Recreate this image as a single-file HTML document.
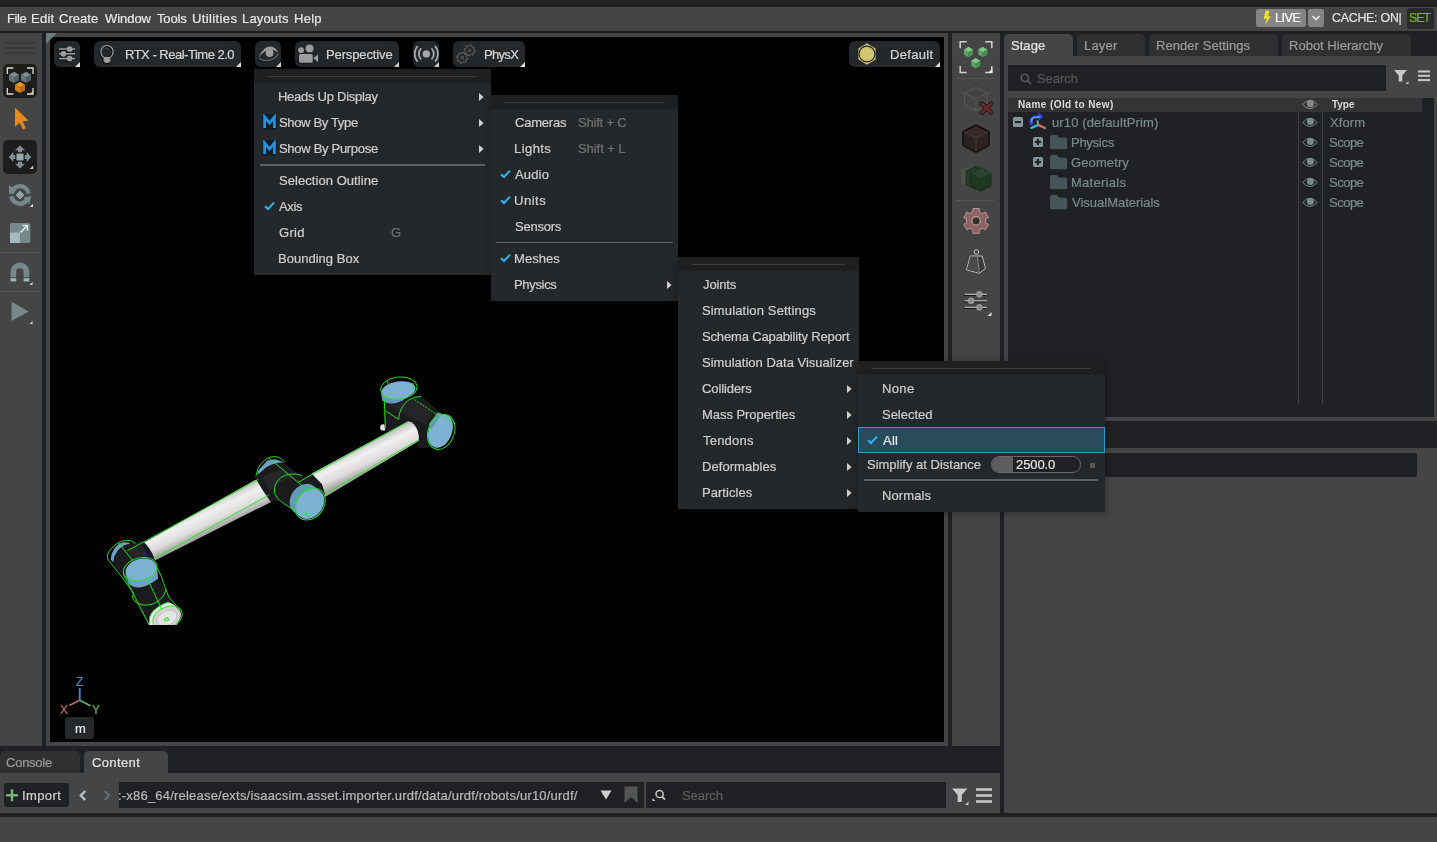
<!DOCTYPE html>
<html lang="en"><head><meta charset="utf-8"><title>Isaac Sim</title>
<style>
html,body{margin:0;padding:0;}
body{width:1437px;height:842px;overflow:hidden;background:#454545;position:relative;font-family:"Liberation Sans", "DejaVu Sans", sans-serif;}
div,span,svg{position:absolute;box-sizing:border-box;}
span{white-space:nowrap;line-height:1;-webkit-text-stroke:0.22px currentColor;will-change:transform;}
</style></head>
<body>
<div style="left:0px;top:0px;width:1437px;height:7px;background:#212121;"></div>
<div style="left:0px;top:31px;width:1437px;height:2px;background:#211d1b;"></div>
<div style="left:42px;top:33px;width:4px;height:713px;background:#1f2124;"></div>
<div style="left:50px;top:37px;width:894px;height:705px;background:#000000;"></div>
<svg style="left:46px;top:33px" width="12" height="12"><polygon points="0,0 11,0 0,11" fill="#6c7b7e"/></svg>
<div style="left:948px;top:33px;width:4px;height:713px;background:#1f2124;"></div>
<div style="left:1000px;top:33px;width:4px;height:780px;background:#1f2124;"></div>
<div style="left:0px;top:746px;width:1000px;height:27px;background:#1f2124;"></div>
<div style="left:0px;top:813px;width:1437px;height:4px;background:#231f1d;"></div>
<div style="left:1004px;top:33px;width:433px;height:23px;background:#1f2124;"></div>
<div style="left:1004px;top:34px;width:69px;height:22px;background:#454545;border-radius:5px 5px 0 0;"></div>
<div style="left:1077px;top:34px;width:68px;height:22px;background:#303030;border-radius:5px 5px 0 0;"></div>
<div style="left:1149px;top:34px;width:129px;height:22px;background:#303030;border-radius:5px 5px 0 0;"></div>
<div style="left:1282px;top:34px;width:129px;height:22px;background:#303030;border-radius:5px 5px 0 0;"></div>
<div style="left:1008px;top:65px;width:378px;height:26px;background:#1f2124;"></div>
<div style="left:1008px;top:98px;width:426px;height:319px;background:#1f2124;"></div>
<div style="left:1008px;top:98px;width:414px;height:14px;background:#343434;"></div>
<div style="left:1298px;top:112px;width:1px;height:293px;background:#3c3e40;"></div>
<div style="left:1322px;top:112px;width:1px;height:293px;background:#3c3e40;"></div>
<div style="left:1004px;top:421px;width:433px;height:27px;background:#1f2124;"></div>
<div style="left:1008px;top:453px;width:409px;height:24px;background:#1f2124;border-radius:2px;"></div>
<span style="left:7px;top:12px;font-size:13px;color:#e6e6e6;letter-spacing:-0.436px;">File</span><span style="left:31px;top:12px;font-size:13px;color:#e6e6e6;letter-spacing:0.252px;">Edit</span><span style="left:59px;top:12px;font-size:13px;color:#e6e6e6;letter-spacing:0.041px;">Create</span><span style="left:105px;top:12px;font-size:13px;color:#e6e6e6;letter-spacing:-0.045px;">Window</span><span style="left:157px;top:12px;font-size:13px;color:#e6e6e6;letter-spacing:-0.149px;">Tools</span><span style="left:192px;top:12px;font-size:13px;color:#e6e6e6;letter-spacing:0.383px;">Utilities</span><span style="left:242px;top:12px;font-size:13px;color:#e6e6e6;letter-spacing:0.165px;">Layouts</span><span style="left:294px;top:12px;font-size:13px;color:#e6e6e6;letter-spacing:0.287px;">Help</span><div style="left:1256px;top:9px;width:50px;height:18px;background:#848484;border-radius:2px;"></div>
<svg style="left:1262px;top:10px" width="10" height="16" viewBox="0 0 10 16"><polygon points="3.6,0.8 7.6,0.8 6,6.2 8.8,6.2 3.2,15 4.6,8.8 1.6,8.8" fill="#ecdc2c"/></svg>
<span style="left:1275px;top:12px;font-size:12.5px;color:#ffffff;letter-spacing:-0.416px;">LIVE</span><div style="left:1308px;top:9px;width:16px;height:18px;background:#848484;border-radius:2px;"></div>
<svg style="left:1311px;top:14px" width="10" height="8" viewBox="0 0 10 8"><polyline points="1.5,2 5,5.5 8.5,2" fill="none" stroke="#e8e8e8" stroke-width="1.6"/></svg>
<span style="left:1332px;top:12px;font-size:12.3px;color:#e0e0e0;letter-spacing:-0.190px;">CACHE: ON|</span><div style="left:1407px;top:7.5px;width:26.6px;height:21.5px;background:#2a2a2a;border-radius:3px;"></div>
<span style="left:1409px;top:12px;font-size:12.5px;color:#76b900;letter-spacing:-1.200px;">SET</span><div style="left:54px;top:41px;width:26px;height:26px;background:#25282b;border-radius:6px;"></div>
<svg style="left:75px;top:62px" width="5" height="5"><polygon points="5,0 5,5 0,5" fill="#dcdcdc"/></svg>
<svg style="left:57px;top:44px" width="21" height="20" viewBox="57 44 21 20">
<g stroke="#14161a" stroke-width="1.6" fill="#14161a" transform="translate(-0.8,0.9)"><line x1="59" y1="49" x2="75" y2="49"/><line x1="59" y1="53.8" x2="75" y2="53.8"/><line x1="59" y1="58.6" x2="75" y2="58.6"/><circle cx="69.6" cy="49" r="2.4"/><circle cx="63.4" cy="53.8" r="2.4"/><circle cx="69.6" cy="58.6" r="2.4"/></g>
<g stroke="#9c9c9c" stroke-width="1.5" fill="#9c9c9c"><line x1="59" y1="49" x2="75" y2="49"/><line x1="59" y1="53.8" x2="75" y2="53.8"/><line x1="59" y1="58.6" x2="75" y2="58.6"/><circle cx="69.6" cy="49" r="2.1"/><circle cx="63.4" cy="53.8" r="2.1"/><circle cx="69.6" cy="58.6" r="2.1"/></g></svg>
<div style="left:94px;top:41px;width:147px;height:26px;background:#25282b;border-radius:6px;"></div>
<svg style="left:236px;top:62px" width="5" height="5"><polygon points="5,0 5,5 0,5" fill="#dcdcdc"/></svg>
<svg style="left:98px;top:43px" width="18" height="23" viewBox="98 43 18 23">
<path d="M103.6,57.5 C102,56.2 100.9,54.2 100.9,51.6 A6.1,6.1 0 0 1 113.1,51.6 C113.1,54.2 112,56.2 110.4,57.5 L110.4,61.2 Q107,65 103.6,61.2 Z" fill="none" stroke="#14161a" stroke-width="1.8" transform="translate(-0.7,0.8)"/>
<path d="M103.6,57.5 C102,56.2 100.9,54.2 100.9,51.6 A6.1,6.1 0 0 1 113.1,51.6 C113.1,54.2 112,56.2 110.4,57.5" fill="none" stroke="#9c9c9c" stroke-width="1.2"/>
<path d="M103.6,57 L110.4,57 L110.4,61.2 Q107,65 103.6,61.2 Z" fill="#9c9c9c"/>
<path d="M105.5,48.6 Q107.5,47.8 109,49.6" fill="none" stroke="#555" stroke-width="0.8"/></svg>
<span style="left:125px;top:48px;font-size:13px;color:#d4d4d4;letter-spacing:-0.495px;">RTX - Real-Time 2.0</span><div style="left:255px;top:41px;width:26px;height:26px;background:#25282b;border-radius:6px;"></div>
<svg style="left:276px;top:62px" width="5" height="5"><polygon points="5,0 5,5 0,5" fill="#dcdcdc"/></svg>
<svg style="left:257px;top:44px" width="23" height="19" viewBox="257 44 23 19">
<path d="M258.6,57.6 Q263.4,46.2 270.2,46.4 Q275.8,46.5 278.3,52.8 Q274.6,49.4 270,49.4 Q264.4,49.6 258.6,57.6 Z" fill="#9c9c9c"/>
<path d="M258.8,58.4 Q266.5,62.8 273.8,58.8 Q276.6,57 278,53.8" fill="none" stroke="#111418" stroke-width="1.6" transform="translate(-0.5,0.8)"/>
<path d="M258.8,58.4 Q266.5,62.8 273.8,58.8 Q276.6,57 278,53.8" fill="none" stroke="#707070" stroke-width="1.1"/>
<circle cx="269.6" cy="53" r="3.9" fill="#9c9c9c"/></svg>
<div style="left:295px;top:41px;width:104px;height:26px;background:#25282b;border-radius:6px;"></div>
<svg style="left:394px;top:62px" width="5" height="5"><polygon points="5,0 5,5 0,5" fill="#dcdcdc"/></svg>
<svg style="left:296px;top:43px" width="24" height="21" viewBox="296 43 24 21">
<g fill="#14161a" transform="translate(-0.8,0.8)"><circle cx="301" cy="50.2" r="3"/><circle cx="309.5" cy="48.4" r="4.1"/><rect x="299" y="54" width="13.7" height="8.8" rx="1.5"/><polygon points="313.4,58.3 318,54.3 318,62.3"/></g>
<g fill="#9c9c9c"><circle cx="301" cy="50.2" r="2.9"/><circle cx="309.5" cy="48.4" r="4"/><rect x="299" y="54" width="13.7" height="8.8" rx="1.5"/><polygon points="313.4,58.3 318,54.3 318,62.3"/></g></svg>
<span style="left:326px;top:48px;font-size:13px;color:#d4d4d4;letter-spacing:-0.128px;">Perspective</span><div style="left:413px;top:41px;width:26px;height:26px;background:#25282b;border-radius:6px;"></div>
<svg style="left:434px;top:62px" width="5" height="5"><polygon points="5,0 5,5 0,5" fill="#dcdcdc"/></svg>
<svg style="left:414px;top:43px" width="25" height="22" viewBox="414 43 25 22">
<g fill="none" stroke="#171a3a" stroke-width="1.9" transform="translate(-0.7,0.6)"><path d="M421.2,48.4 A7.5,7.5 0 0 0 421.2,59.4"/><path d="M431.4,48.4 A7.5,7.5 0 0 1 431.4,59.4"/><path d="M417.6,46.2 A11.5,11.5 0 0 0 417.6,61.6"/><path d="M435,46.2 A11.5,11.5 0 0 1 435,61.6"/></g>
<g fill="none" stroke="#a8a8a8" stroke-width="1.8"><path d="M421.2,48.4 A7.5,7.5 0 0 0 421.2,59.4"/><path d="M431.4,48.4 A7.5,7.5 0 0 1 431.4,59.4"/><path d="M417.6,46.2 A11.5,11.5 0 0 0 417.6,61.6"/><path d="M435,46.2 A11.5,11.5 0 0 1 435,61.6"/></g>
<circle cx="426.3" cy="53.9" r="3.7" fill="#a8a8a8"/></svg>
<div style="left:453px;top:41px;width:72px;height:26px;background:#25282b;border-radius:6px;"></div>
<svg style="left:520px;top:62px" width="5" height="5"><polygon points="5,0 5,5 0,5" fill="#dcdcdc"/></svg>
<svg style="left:455px;top:43px" width="22" height="22" viewBox="455 43 22 22"><polygon points="467.77,58.35 467.56,59.43 465.90,59.78 465.45,60.46 465.75,62.13 464.84,62.74 463.42,61.82 462.61,61.98 461.65,63.37 460.57,63.16 460.22,61.50 459.54,61.05 457.87,61.35 457.26,60.44 458.18,59.02 458.02,58.21 456.63,57.25 456.84,56.17 458.50,55.82 458.95,55.14 458.65,53.47 459.56,52.86 460.98,53.78 461.79,53.62 462.75,52.23 463.83,52.44 464.18,54.10 464.86,54.55 466.53,54.25 467.14,55.16 466.22,56.58 466.38,57.39" fill="none" stroke="#6d6d6d" stroke-width="0.9" stroke-linejoin="round"/><circle cx="462.2" cy="57.8" r="1.3" fill="none" stroke="#6d6d6d" stroke-width="0.9"/><polygon points="475.17,50.95 474.96,52.03 473.30,52.38 472.85,53.06 473.15,54.73 472.24,55.34 470.82,54.42 470.01,54.58 469.05,55.97 467.97,55.76 467.62,54.10 466.94,53.65 465.27,53.95 464.66,53.04 465.58,51.62 465.42,50.81 464.03,49.85 464.24,48.77 465.90,48.42 466.35,47.74 466.05,46.07 466.96,45.46 468.38,46.38 469.19,46.22 470.15,44.83 471.23,45.04 471.58,46.70 472.26,47.15 473.93,46.85 474.54,47.76 473.62,49.18 473.78,49.99" fill="none" stroke="#6d6d6d" stroke-width="0.9" stroke-linejoin="round"/><circle cx="469.6" cy="50.4" r="1.3" fill="none" stroke="#6d6d6d" stroke-width="0.9"/></svg>
<span style="left:484px;top:48px;font-size:13px;color:#d4d4d4;letter-spacing:-0.685px;">PhysX</span><div style="left:849px;top:41px;width:91px;height:26px;background:#25282b;border-radius:6px;"></div>
<svg style="left:935px;top:62px" width="5" height="5"><polygon points="5,0 5,5 0,5" fill="#dcdcdc"/></svg>
<svg style="left:855px;top:42px" width="24" height="24" viewBox="855 42 24 24">
<polygon points="867,43.2 875.6,48.4 875.6,59.6 867,64.8 858.4,59.6 858.4,48.4" fill="#cfc56c"/>
<circle cx="867" cy="54" r="7.9" fill="#cfc56c" stroke="#1b1d20" stroke-width="1.1"/></svg>
<span style="left:890px;top:48px;font-size:13px;color:#d4d4d4;letter-spacing:0.326px;">Default</span><div style="left:3px;top:42.3px;width:34px;height:2px;background:#393939;"></div>
<div style="left:3px;top:47.3px;width:34px;height:2px;background:#393939;"></div>
<div style="left:3px;top:52.3px;width:34px;height:2px;background:#393939;"></div>
<div style="left:3px;top:64px;width:34px;height:34px;background:#1f1d1b;border-radius:5px;"></div>
<svg style="left:3px;top:64px" width="34" height="34" viewBox="3 64 34 34">
<g fill="none" stroke="#dedad2" stroke-width="1.3"><polyline points="7.3,74 7.3,68 13.3,68"/><polyline points="27,68 33,68 33,74"/><polyline points="7.3,88 7.3,94 13.3,94"/><polyline points="27,94 33,94 33,88"/></g>
<polygon points="14,71.8 19,74.69999999999999 14,77.6 9,74.69999999999999" fill="#7d8f93"/><polygon points="9,74.69999999999999 14,77.6 14,83.1 9,80.19999999999999" fill="#62757a"/><polygon points="19,74.69999999999999 14,77.6 14,83.1 19,80.19999999999999" fill="#506166"/>
<polygon points="26,71.8 31,74.69999999999999 26,77.6 21,74.69999999999999" fill="#7d8f93"/><polygon points="21,74.69999999999999 26,77.6 26,83.1 21,80.19999999999999" fill="#62757a"/><polygon points="31,74.69999999999999 26,77.6 26,83.1 31,80.19999999999999" fill="#506166"/>
<polygon points="20,81.8 25,84.69999999999999 20,87.6 15,84.69999999999999" fill="#ea9422"/><polygon points="15,84.69999999999999 20,87.6 20,93.1 15,90.19999999999999" fill="#d4801a"/><polygon points="25,84.69999999999999 20,87.6 20,93.1 25,90.19999999999999" fill="#c07012"/>
<polygon points="33,91 33,94 30,94" fill="#dad6cc"/></svg>
<svg style="left:13px;top:106px" width="18" height="25" viewBox="13 106 18 25">
<polygon points="15,107.6 15,126.8 19.6,122.8 23,129.6 25.8,128.2 22.7,121.6 28.4,120.6" fill="#e58a1f"/></svg>
<div style="left:3px;top:140px;width:34px;height:34px;background:#1f1d1b;border-radius:5px;"></div>
<svg style="left:3px;top:140px" width="34" height="34" viewBox="3 140 34 34">
<g fill="#7d9196"><polygon points="20,145.6 25,150.3 15,150.3"/><rect x="18" y="150" width="4" height="2.2"/>
<polygon points="20,168.4 25,163.7 15,163.7"/><rect x="18" y="161.8" width="4" height="2.2"/>
<polygon points="8.7,157 13.3,152.1 13.3,161.9"/><rect x="13" y="155" width="2.2" height="4"/>
<polygon points="31.3,157 26.7,152.1 26.7,161.9"/><rect x="24.8" y="155" width="2.2" height="4"/></g>
<rect x="16.4" y="153.5" width="7.2" height="7" rx="1.2" fill="#94a8ad"/>
<polygon points="33.2,165.6 33.2,168.9 29.9,168.9" fill="#d8d8d8"/></svg>
<svg style="left:7px;top:182px" width="27" height="27" viewBox="7 182 27 27">
<g fill="none" stroke="#75888c" stroke-width="4.4"><path d="M11.5,193.9 A8.6,8.6 0 0 1 28.55,193.4"/><path d="M11.45,196.4 A8.6,8.6 0 0 0 26.6,200.5"/></g>
<polygon points="9,185.2 9.1,193.6 16.6,190.4" fill="#75888c"/><polygon points="30.9,196.1 23.4,197.5 29.6,204.2" fill="#75888c"/>
<polygon points="20,191 24,195 20,199 16,195" fill="#8fa4a9" stroke="#8fa4a9" stroke-width="0.8" stroke-linejoin="round"/>
<polygon points="33,203.7 33,207 29.7,207" fill="#d8d8d8"/></svg>
<svg style="left:9px;top:222px" width="22" height="22" viewBox="9 222 22 22">
<rect x="10" y="223" width="20.3" height="20" rx="1.6" fill="#75888c"/>
<rect x="10" y="232.6" width="10" height="10.4" rx="1" fill="#a4babf"/>
<g stroke="#e4ecec" stroke-width="1.5" fill="none"><line x1="20.6" y1="232.4" x2="27.2" y2="225.8"/><polyline points="22.6,225.6 27.4,225.6 27.4,230.4"/></g></svg>
<div style="left:1px;top:252px;width:38px;height:1px;background:#555555;"></div>
<svg style="left:9px;top:261px" width="24" height="25" viewBox="9 261 24 25">
<path d="M10.5,277.2 V271.8 A9.4,9.2 0 0 1 29.3,271.8 V277.2 H23.6 V272 A3.7,3.7 0 0 0 16.2,272 V277.2 Z" fill="#75888c"/>
<rect x="10.5" y="278.3" width="5.7" height="3.1" fill="#a4babf"/><rect x="23.6" y="278.3" width="5.7" height="3.1" fill="#a4babf"/>
<polygon points="32.5,282 32.5,285 29.5,285" fill="#d8d8d8"/></svg>
<div style="left:1px;top:291px;width:38px;height:1px;background:#555555;"></div>
<svg style="left:10px;top:300px" width="24" height="25" viewBox="10 300 24 25">
<polygon points="11.5,301.8 28.7,311.4 11.5,321" fill="#75888c"/>
<polygon points="32.5,321 32.5,324 29.5,324" fill="#d8d8d8"/></svg>
<svg style="left:956px;top:38px" width="40" height="38" viewBox="956 38 40 38">
<g fill="none" stroke="#cfcfcf" stroke-width="1.5"><polyline points="960.2,48.3 960.2,41.8 966.7,41.8"/><polyline points="985.3,41.8 991.8,41.8 991.8,48.3"/><polyline points="960.2,65.9 960.2,72.4 966.7,72.4"/><polyline points="985.3,72.4 991.8,72.4 991.8,65.9"/></g>
<polygon points="968.5,46.864000000000004 973.1,49.532000000000004 968.5,52.2 963.9,49.532000000000004" fill="#7fc886"/><polygon points="963.9,49.532000000000004 968.5,52.2 968.5,57.260000000000005 963.9,54.592000000000006" fill="#5aa463"/><polygon points="973.1,49.532000000000004 968.5,52.2 968.5,57.260000000000005 973.1,54.592000000000006" fill="#4a9254"/>
<polygon points="982.8,46.864000000000004 987.4,49.532000000000004 982.8,52.2 978.1999999999999,49.532000000000004" fill="#7fc886"/><polygon points="978.1999999999999,49.532000000000004 982.8,52.2 982.8,57.260000000000005 978.1999999999999,54.592000000000006" fill="#5aa463"/><polygon points="987.4,49.532000000000004 982.8,52.2 982.8,57.260000000000005 987.4,54.592000000000006" fill="#4a9254"/>
<polygon points="975.8,58.064 980.4,60.732 975.8,63.4 971.1999999999999,60.732" fill="#7fc886"/><polygon points="971.1999999999999,60.732 975.8,63.4 975.8,68.46 971.1999999999999,65.79199999999999" fill="#5aa463"/><polygon points="980.4,60.732 975.8,63.4 975.8,68.46 980.4,65.79199999999999" fill="#4a9254"/>
<polygon points="992.4,68.5 992.4,73 988,73" fill="#e8e8e8"/></svg>
<div style="left:956px;top:78px;width:38px;height:1px;background:#555555;"></div>
<svg style="left:960px;top:84px" width="36" height="32" viewBox="960 84 36 32">
<g fill="none" stroke="#5a5a5a" stroke-width="0.9"><polygon points="976,87.2 987.4,93 987.4,105.2 976,111 964.6,105.2 964.6,93"/><polyline points="964.6,93 976,98.8 987.4,93"/><line x1="976" y1="98.8" x2="976" y2="111"/></g>
<g stroke="#241818" stroke-width="4.6" stroke-linecap="round"><line x1="982" y1="103.6" x2="991" y2="112.6"/><line x1="991" y1="103.6" x2="982" y2="112.6"/></g>
<g stroke="#6c2b2b" stroke-width="2.6" stroke-linecap="round"><line x1="982" y1="103.6" x2="991" y2="112.6"/><line x1="991" y1="103.6" x2="982" y2="112.6"/></g></svg>
<svg style="left:960px;top:122px" width="32" height="33" viewBox="960 122 32 33">
<polygon points="976,125 989,131.6 989,145.6 976,152.4 963,145.6 963,131.6" fill="#2c2222" stroke="#161010" stroke-width="1.6" stroke-linejoin="round"/>
<polygon points="976,126.4 987.6,132.2 976,138 964.4,132.2" fill="#352929"/>
<g fill="none" stroke="#5a4242" stroke-width="0.8"><polyline points="964.4,132.2 976,138 987.6,132.2"/><line x1="976" y1="138" x2="976" y2="151"/></g></svg>
<svg style="left:958px;top:162px" width="36" height="32" viewBox="958 162 36 32">
<polygon points="961,170 971,165 981,170 981,183 971,188 961,183" fill="#555a55" opacity="0.55"/>
<polygon points="966,171 976,166 986,171 986,184.5 976,189.5 966,184.5" fill="#233c26" stroke="#1c2e1e" stroke-width="0.8"/>
<polygon points="971,173 981,168 991,173 991,186 981,191 971,186" fill="#1f3822" stroke="#172819" stroke-width="0.9"/>
<polygon points="971,173 981,168 991,173 981,178" fill="#28442c"/></svg>
<div style="left:956px;top:200px;width:38px;height:1px;background:#555555;"></div>
<svg style="left:961px;top:206px" width="30" height="30" viewBox="961 206 30 30"><polygon points="972.94,211.73 972.90,208.51 979.30,208.51 979.26,211.73 982.46,213.58 985.23,211.93 988.43,217.48 985.62,219.05 985.62,222.75 988.43,224.32 985.23,229.87 982.46,228.22 979.26,230.07 979.30,233.29 972.90,233.29 972.94,230.07 969.74,228.22 966.97,229.87 963.77,224.32 966.58,222.75 966.58,219.05 963.77,217.48 966.97,211.93 969.74,213.58" fill="#8c6464" stroke="#c49c9c" stroke-width="0.9" stroke-linejoin="round"/><circle cx="976.1" cy="220.9" r="4.2" fill="#3a3030" stroke="#c49c9c" stroke-width="1.2"/></svg>
<svg style="left:963px;top:247px" width="26" height="28" viewBox="963 247 26 28">
<circle cx="976.4" cy="252" r="2.3" fill="none" stroke="#c4c4c4" stroke-width="1"/>
<polygon points="970.3,256 982.1,256 985.5,268.4 979.3,273.3 966.5,269.8" fill="#3a3a3a" stroke="#bcbcbc" stroke-width="1" stroke-linejoin="round"/>
<polygon points="970.6,256.6 977.4,257.4 979,272.6 967.2,269.4" fill="#4b4b4b"/>
<polyline points="977.6,257.2 979.3,273" fill="none" stroke="#9a9a9a" stroke-width="0.8"/></svg>
<svg style="left:962px;top:288px" width="32" height="30" viewBox="962 288 32 30">
<g stroke="#15171b" stroke-width="1.6" transform="translate(-0.8,0.9)"><line x1="964.5" y1="294.3" x2="987" y2="294.3"/><line x1="964.5" y1="300.8" x2="987" y2="300.8"/><line x1="964.5" y1="307.3" x2="987" y2="307.3"/></g>
<g stroke="#c4c4c4" stroke-width="1.1"><line x1="964.5" y1="294.3" x2="987" y2="294.3"/><line x1="964.5" y1="300.8" x2="987" y2="300.8"/><line x1="964.5" y1="307.3" x2="987" y2="307.3"/></g>
<g fill="#8a8a8a" stroke="#b4b4b4" stroke-width="0.7"><circle cx="979.4" cy="294.3" r="2.9"/><circle cx="971" cy="300.8" r="2.9"/><circle cx="979.4" cy="307.3" r="2.9"/></g>
<polygon points="991.5,312 991.5,316 987.5,316" fill="#d8d8d8"/></svg>
<svg style="left:56px;top:672px" width="48" height="46" viewBox="56 672 48 46">
<line x1="79.7" y1="700.5" x2="79.7" y2="688" stroke="#4b84ba" stroke-width="1.9"/>
<line x1="79.7" y1="700.3" x2="69.4" y2="705.6" stroke="#c06870" stroke-width="1.7"/>
<line x1="79.7" y1="700.3" x2="90.4" y2="705.8" stroke="#66ae76" stroke-width="1.7"/></svg>
<span style="left:76px;top:676px;font-size:12px;color:#4b84ba;">Z</span><span style="left:60px;top:704px;font-size:12px;color:#c06870;">X</span><span style="left:92px;top:704px;font-size:12px;color:#66ae76;">Y</span><div style="left:65px;top:717px;width:29px;height:22px;background:#25282b;border-radius:2px;"></div>
<span style="left:75px;top:722px;font-size:13px;color:#e0e0e0;">m</span><div style="left:0px;top:751px;width:80px;height:22px;background:#303030;border-radius:5px 5px 0 0;"></div>
<div style="left:84px;top:751px;width:84px;height:22px;background:#454545;border-radius:5px 5px 0 0;"></div>
<span style="left:6px;top:756px;font-size:13px;color:#9a9a9a;letter-spacing:-0.244px;">Console</span><span style="left:92px;top:756px;font-size:13px;color:#e2e2e2;letter-spacing:0.368px;">Content</span><div style="left:4px;top:783px;width:65px;height:24px;background:#1f2124;border-radius:3px;"></div>
<svg style="left:6px;top:789px" width="12" height="13" viewBox="0 0 12 13"><rect x="4.8" y="0.3" width="2.4" height="12" fill="#74b874"/><rect x="0" y="5.1" width="12" height="2.4" fill="#74b874"/></svg>
<span style="left:22px;top:789px;font-size:13px;color:#d0d0d0;letter-spacing:0.390px;">Import</span><svg style="left:79px;top:790px" width="8" height="11" viewBox="0 0 8 11"><polyline points="6.2,1 1.8,5.5 6.2,10" fill="none" stroke="#b4c4c8" stroke-width="2.4"/></svg>
<svg style="left:103px;top:790px" width="8" height="11" viewBox="0 0 8 11"><polyline points="1.8,1 6.2,5.5 1.8,10" fill="none" stroke="#5e6e72" stroke-width="2.4"/></svg>
<div style="left:119px;top:782px;width:525px;height:26px;background:#1f2124;"></div>
<div style="left:119px;top:782px;width:475px;height:26px;overflow:hidden;"><span style="left:-1px;top:7px;font-size:13px;color:#b8b8b8;letter-spacing:0.205px;">:-x86_64/release/exts/isaacsim.asset.importer.urdf/data/urdf/robots/ur10/urdf/</span></div>
<svg style="left:600px;top:790px" width="12" height="10" viewBox="0 0 12 10"><polygon points="0.5,0.5 11.5,0.5 6,9.5" fill="#d0d0d0"/></svg>
<svg style="left:624px;top:786px" width="14" height="18" viewBox="0 0 14 18"><polygon points="0.5,0.5 13.5,0.5 13.5,17 7,11 0.5,17" fill="#555555"/></svg>
<div style="left:646px;top:782px;width:300px;height:26px;background:#1f2124;"></div>
<svg style="left:652px;top:789px" width="14" height="13" viewBox="0 0 14 13"><circle cx="7.6" cy="5" r="3.6" fill="none" stroke="#c8c8c8" stroke-width="1.5"/><line x1="10.2" y1="7.6" x2="13" y2="10.6" stroke="#c8c8c8" stroke-width="1.7"/><polygon points="0.5,9 0.5,12 3.5,12" fill="#c8c8c8"/></svg>
<span style="left:682px;top:789px;font-size:13px;color:#5c5c5c;letter-spacing:-0.054px;">Search</span><svg style="left:100px;top:370px" width="370" height="260" viewBox="100 370 370 260">
<defs>
<linearGradient id="tg1" gradientUnits="userSpaceOnUse" x1="200" y1="508" x2="211" y2="531"><stop offset="0" stop-color="#c9c7c7"/><stop offset="0.3" stop-color="#f1f0f0"/><stop offset="0.7" stop-color="#dddbdb"/><stop offset="1" stop-color="#aaa6a6"/></linearGradient>
<linearGradient id="tg2" gradientUnits="userSpaceOnUse" x1="360" y1="447" x2="371" y2="470"><stop offset="0" stop-color="#c9c7c7"/><stop offset="0.3" stop-color="#f1f0f0"/><stop offset="0.7" stop-color="#dddbdb"/><stop offset="1" stop-color="#aaa6a6"/></linearGradient>
<clipPath id="rc"><rect x="100" y="370" width="370" height="255"/></clipPath>
</defs>
<g clip-path="url(#rc)">
<!-- tube 1 -->
<polygon points="142.3,543.6 256.3,479.4 272.3,501.4 154.8,560.4" fill="url(#tg1)"/>

<!-- ===== lower-left joint ===== -->
<path d="M124.5,542 L131,543.2 L124,545.5 L118.3,550 L114.5,556.5 L113.3,562.8 L110.8,559.5 L111.5,554 L115,547.5 L119.5,543.5 Z" fill="#6d9fc2"/>
<path d="M131,543.2 L142.5,540.8 Q150.5,548 154,557.6 L157,565 L158.4,578 L165.3,591.8 L171.5,601.3 L157,606.4 L148,617.5 L148.7,625 L134.4,601.3 L128.5,584 L123.2,576.4 L113.3,562.8 L114.5,556.5 L118.3,550 L124,545.5 Z" fill="#1b1b1d"/>
<path d="M128,549 L141,545 Q147,552 149,559 L133,562 Z" fill="#262628"/>
<!-- front blue cap -->
<path d="M125.4,573 L128.6,583.6 Q139,593.6 158.2,578.6 L156.8,567 Z" fill="#6f9fc4"/>
<ellipse cx="141.1" cy="569.6" rx="15.8" ry="10.6" transform="rotate(-15 141.1 569.6)" fill="#7eb0d2"/>
<!-- white end -->
<path d="M148.8,626 L149.7,617 Q152,610 159.9,606.1 Q165,603 168.9,602.3 L174.7,604.9 L179.2,611.9 Q180.2,617 176.4,626 Z" fill="#e9e6e7"/>
<ellipse cx="167.4" cy="617.6" rx="14.2" ry="9.8" transform="rotate(-25 167.4 617.6)" fill="#d3d0d1"/>
<ellipse cx="167.2" cy="618" rx="10.2" ry="7" transform="rotate(-25 167.2 618)" fill="#e5e3e4" stroke="#bdbabb" stroke-width="0.6"/>

<!-- ===== upper-right joint ===== -->
<circle cx="383.4" cy="427.4" r="3.2" fill="#e4e2e2"/>
<path d="M381.6,396 L385.2,431.5 L400,436 L418.7,441 L417.5,448.6 L430,447.4 L428,436 L432,419 L439,412.4 L425.8,399.4 L417.5,395.3 L410.4,398.3 L402,400.8 Z" fill="#1b1b1d"/>
<path d="M388,404 L398,402 L410,400 L424,404 L432,414 L426,424 L416,420 L404,414 Z" fill="#252527"/>
<!-- tube 2 -->
<path d="M309,475 L408,421.2 Q414.6,422.6 417.6,430.6 Q419.4,436 418.7,441 L325,497 Z" fill="url(#tg2)"/>
<path d="M381.2,394 L382.2,400.6 Q390,406.4 402.4,400.8 L414,392 Z" fill="#6797ba"/>
<ellipse cx="398.4" cy="390.4" rx="17.2" ry="8.9" transform="rotate(-9 398.4 390.4)" fill="#7eb0d2"/>
<ellipse cx="440.4" cy="431" rx="11.6" ry="17.4" transform="rotate(21 440.4 431)" fill="#7eb0d2"/>
<path d="M429,424 L437.5,412.6 L442,413.4 L431,430 Z" fill="#6797ba"/>

<!-- ===== middle joint ===== -->
<path d="M254.3,476 L258,471 L267.3,460.8 L275.6,459.4 L284,462.6 L295.8,472 L302.9,476.6 L311.3,473.2 L321.9,483.9 L325,494 L324,503 L310,519 L296,516 L286.3,504.1 L279.2,500.6 L270.9,502.2 Q262,490 254.3,476 Z" fill="#1b1b1d"/>
<path d="M257.6,471.2 L267.3,460.6 L275.6,459.2 L284.2,462.6 Q274,462.4 266,467.4 L258,474.6 Z" fill="#6d9fc2"/>
<ellipse cx="303.7" cy="498.8" rx="12.6" ry="16.2" transform="rotate(38 303.7 498.8)" fill="#6797ba"/><polygon points="300.2,516.8 293.7,511.6 313.7,486 320.2,491.2" fill="#6797ba"/>
<ellipse cx="310.2" cy="504" rx="12.6" ry="16.2" transform="rotate(38 310.2 504)" fill="#7eb0d2"/>
<path d="M262,478 Q272,470 285,470 L296,478 Q282,478 270,490 Z" fill="#262628"/>

<!-- ===== green collider wireframes ===== -->
<g fill="none" stroke="#1fe81f" stroke-width="0.95">
<!-- lower-left -->
<path d="M135.4,543.3 Q131,539.4 125.4,540.3 Q114.7,542.4 108.6,552 Q105.4,558.4 110.4,562.6 L121.8,576.8 L134,594"/>
<line x1="118.3" y1="542.6" x2="132.5" y2="560.4"/>
<line x1="127.3" y1="550.8" x2="258.4" y2="479.4"/>
<line x1="153.4" y1="559.1" x2="268.5" y2="495.2"/>
<ellipse cx="140.2" cy="569.2" rx="17.2" ry="11.2" transform="rotate(-15 140.2 569.2)"/>
<path d="M133.4,594.4 Q131.2,597.4 133.6,600.2 Q141,607.6 153,604 Q163.6,599.6 166.3,588.8"/>
<line x1="123.2" y1="573.9" x2="148.7" y2="624"/>
<polyline points="157.1,567.5 161.2,576 165,587.5 168.9,597.2 175.3,604.2 180,610.6"/>
<line x1="146.8" y1="577.5" x2="161.8" y2="609.6"/>
<path d="M149,626 L149.7,617 Q152.5,609.6 162.5,604.2 Q166,602.6 169,602.4"/>
<ellipse cx="167.5" cy="617.5" rx="15.4" ry="10.4" transform="rotate(-25 167.5 617.5)"/>
<rect x="164.6" y="618.4" width="3.8" height="2.4" transform="rotate(-25 166.5 619.6)"/>
<!-- middle -->
<path d="M256,475.6 Q258,462 270,457.2 Q279,454.6 284.5,462"/>
<line x1="268.5" y1="457.8" x2="310.1" y2="492.3"/>
<path d="M301.8,475.6 Q291,471.4 281,477.4 Q273,484 274.6,493.4 Q277,499.4 283,503 L295.8,511.3"/>
<ellipse cx="310.2" cy="504" rx="13.6" ry="17.2" transform="rotate(38 310.2 504)"/>
<line x1="298.2" y1="482.2" x2="408" y2="422"/>
<line x1="325.5" y1="494" x2="418.7" y2="439.8"/>
<line x1="304" y1="511" x2="309" y2="518"/>
<!-- upper-right -->
<ellipse cx="398.9" cy="388.2" rx="18.4" ry="11.2" transform="rotate(-6 398.9 388.2)"/>
<line x1="387.8" y1="380.4" x2="387.8" y2="385.2"/>
<line x1="384.3" y1="399.4" x2="385.4" y2="428"/>
<line x1="412.8" y1="382.8" x2="413.4" y2="390.6"/>
<path d="M398.5,419.6 Q399,408 408,400.4 Q414,396.4 421,396.5"/>
<line x1="385.4" y1="410.7" x2="397.9" y2="419"/>
<line x1="414" y1="399.4" x2="440" y2="416.7" stroke-dasharray="2.2 1.2"/>
<ellipse cx="441.2" cy="432" rx="13" ry="18" transform="rotate(21 441.2 432)"/>
<line x1="445" y1="417" x2="455" y2="424"/>
</g>
</g>
</svg>
<div style="left:254px;top:69px;width:236.5px;height:205.5px;background:#25282a;box-shadow:0 1px 8px rgba(0,0,0,0.35);"></div>
<div style="left:254px;top:69px;width:236.5px;height:14px;background:#1d1f21;"></div>
<div style="left:268.5px;top:76px;width:208.0px;height:1px;background:#3a3c3e;"></div>
<span style="left:278px;top:90px;font-size:13px;color:#cdcdcd;letter-spacing:-0.264px;">Heads Up Display</span><svg style="left:479px;top:92.5px" width="5" height="8" viewBox="0 0 5 8"><polygon points="0,0 4.6,4 0,8" fill="#d0d0d0"/></svg>
<svg style="left:261.5px;top:114.3px" width="15" height="16" viewBox="0 0 15 16"><rect width="15" height="15.5" rx="2.4" fill="#0f1d28"/><polyline points="2.6,14 2.6,3 7.5,9 12.4,3 12.4,14" fill="none" stroke="#1f92e2" stroke-width="2.8" stroke-linejoin="miter"/></svg>
<span style="left:279px;top:116px;font-size:13px;color:#cdcdcd;letter-spacing:-0.337px;">Show By Type</span><svg style="left:479px;top:118.5px" width="5" height="8" viewBox="0 0 5 8"><polygon points="0,0 4.6,4 0,8" fill="#d0d0d0"/></svg>
<svg style="left:261.5px;top:140.3px" width="15" height="16" viewBox="0 0 15 16"><rect width="15" height="15.5" rx="2.4" fill="#0f1d28"/><polyline points="2.6,14 2.6,3 7.5,9 12.4,3 12.4,14" fill="none" stroke="#1f92e2" stroke-width="2.8" stroke-linejoin="miter"/></svg>
<span style="left:279px;top:142px;font-size:13px;color:#cdcdcd;letter-spacing:-0.298px;">Show By Purpose</span><svg style="left:479px;top:144.5px" width="5" height="8" viewBox="0 0 5 8"><polygon points="0,0 4.6,4 0,8" fill="#d0d0d0"/></svg>
<div style="left:260px;top:164.1px;width:225px;height:1.5px;background:#5e6062;"></div>
<span style="left:279px;top:174px;font-size:13px;color:#cdcdcd;letter-spacing:0.055px;">Selection Outline</span><svg style="left:264px;top:201px" width="11" height="10" viewBox="0 0 11 10"><polyline points="1,5.2 4,8 10,1.6" fill="none" stroke="#2fb4f2" stroke-width="2"/></svg>
<span style="left:279px;top:200px;font-size:13px;color:#cdcdcd;letter-spacing:-0.356px;">Axis</span><span style="left:279px;top:226px;font-size:13px;color:#cdcdcd;letter-spacing:0.310px;">Grid</span><span style="left:391px;top:226px;font-size:13px;color:#6f7173;">G</span><span style="left:278px;top:252px;font-size:13px;color:#cdcdcd;letter-spacing:0.023px;">Bounding Box</span><div style="left:490.5px;top:95px;width:187.79999999999995px;height:205.5px;background:#25282a;box-shadow:0 1px 8px rgba(0,0,0,0.35);"></div>
<div style="left:490.5px;top:95px;width:187.79999999999995px;height:14px;background:#1d1f21;"></div>
<div style="left:504px;top:102px;width:161px;height:1px;background:#3a3c3e;"></div>
<span style="left:515px;top:116px;font-size:13px;color:#cdcdcd;letter-spacing:-0.220px;">Cameras</span><span style="left:578px;top:116px;font-size:13px;color:#6f7173;letter-spacing:-0.204px;">Shift + C</span><span style="left:514px;top:142px;font-size:13px;color:#cdcdcd;letter-spacing:0.427px;">Lights</span><span style="left:578px;top:142px;font-size:13px;color:#6f7173;letter-spacing:-0.068px;">Shift + L</span><svg style="left:500px;top:169px" width="11" height="10" viewBox="0 0 11 10"><polyline points="1,5.2 4,8 10,1.6" fill="none" stroke="#2fb4f2" stroke-width="2"/></svg>
<span style="left:515px;top:168px;font-size:13px;color:#cdcdcd;letter-spacing:0.155px;">Audio</span><svg style="left:500px;top:195px" width="11" height="10" viewBox="0 0 11 10"><polyline points="1,5.2 4,8 10,1.6" fill="none" stroke="#2fb4f2" stroke-width="2"/></svg>
<span style="left:514px;top:194px;font-size:13px;color:#cdcdcd;letter-spacing:0.537px;">Units</span><span style="left:515px;top:220px;font-size:13px;color:#cdcdcd;letter-spacing:-0.224px;">Sensors</span><div style="left:496px;top:241.7px;width:177px;height:1.5px;background:#5e6062;"></div>
<svg style="left:500px;top:253px" width="11" height="10" viewBox="0 0 11 10"><polyline points="1,5.2 4,8 10,1.6" fill="none" stroke="#2fb4f2" stroke-width="2"/></svg>
<span style="left:514px;top:252px;font-size:13px;color:#cdcdcd;letter-spacing:0.061px;">Meshes</span><span style="left:514px;top:278px;font-size:13px;color:#cdcdcd;letter-spacing:-0.327px;">Physics</span><svg style="left:667px;top:280.5px" width="5" height="8" viewBox="0 0 5 8"><polygon points="0,0 4.6,4 0,8" fill="#d0d0d0"/></svg>
<div style="left:678.3px;top:257.3px;width:180.70000000000005px;height:251.7px;background:#25282a;box-shadow:0 1px 8px rgba(0,0,0,0.35);"></div>
<div style="left:678.3px;top:257.3px;width:180.70000000000005px;height:14px;background:#1d1f21;"></div>
<div style="left:691.7px;top:264.3px;width:153.0px;height:1px;background:#3a3c3e;"></div>
<span style="left:703px;top:278px;font-size:13px;color:#cdcdcd;letter-spacing:-0.119px;">Joints</span><span style="left:702px;top:304px;font-size:13px;color:#cdcdcd;letter-spacing:0.138px;">Simulation Settings</span><span style="left:702px;top:330px;font-size:13px;color:#cdcdcd;letter-spacing:-0.150px;">Schema Capability Report</span><span style="left:702px;top:356px;font-size:13px;color:#cdcdcd;letter-spacing:0.008px;">Simulation Data Visualizer</span><span style="left:702px;top:382px;font-size:13px;color:#cdcdcd;letter-spacing:-0.094px;">Colliders</span><svg style="left:847px;top:384.5px" width="5" height="8" viewBox="0 0 5 8"><polygon points="0,0 4.6,4 0,8" fill="#d0d0d0"/></svg>
<span style="left:702px;top:408px;font-size:13px;color:#cdcdcd;letter-spacing:-0.049px;">Mass Properties</span><svg style="left:847px;top:410.5px" width="5" height="8" viewBox="0 0 5 8"><polygon points="0,0 4.6,4 0,8" fill="#d0d0d0"/></svg>
<span style="left:703px;top:434px;font-size:13px;color:#cdcdcd;letter-spacing:0.218px;">Tendons</span><svg style="left:847px;top:436.5px" width="5" height="8" viewBox="0 0 5 8"><polygon points="0,0 4.6,4 0,8" fill="#d0d0d0"/></svg>
<span style="left:702px;top:460px;font-size:13px;color:#cdcdcd;letter-spacing:0.053px;">Deformables</span><svg style="left:847px;top:462.5px" width="5" height="8" viewBox="0 0 5 8"><polygon points="0,0 4.6,4 0,8" fill="#d0d0d0"/></svg>
<span style="left:702px;top:486px;font-size:13px;color:#cdcdcd;letter-spacing:0.047px;">Particles</span><svg style="left:847px;top:488.5px" width="5" height="8" viewBox="0 0 5 8"><polygon points="0,0 4.6,4 0,8" fill="#d0d0d0"/></svg>
<div style="left:858.3px;top:361.3px;width:246.70000000000005px;height:150.7px;background:#25282a;border-radius:0 5px 0 0;box-shadow:0 1px 8px rgba(0,0,0,0.35);"></div>
<div style="left:858.3px;top:361.3px;width:246.70000000000005px;height:14px;background:#1d1f21;border-radius:0 5px 0 0;"></div>
<div style="left:872px;top:368.3px;width:219px;height:1px;background:#3a3c3e;"></div>
<span style="left:882px;top:382px;font-size:13px;color:#cdcdcd;letter-spacing:0.355px;">None</span><span style="left:882px;top:408px;font-size:13px;color:#cdcdcd;letter-spacing:-0.024px;">Selected</span><div style="left:858.3px;top:426.8px;width:246.7px;height:25.8px;background:#284c5c;border:1.6px solid #2d98c8;"></div>
<svg style="left:867px;top:435px" width="11" height="10" viewBox="0 0 11 10"><polyline points="1,5.2 4,8 10,1.6" fill="none" stroke="#2fb4f2" stroke-width="2"/></svg>
<span style="left:883px;top:434px;font-size:13px;color:#e4e4e4;letter-spacing:0.221px;">All</span><span style="left:867px;top:458px;font-size:13px;color:#cdcdcd;letter-spacing:-0.005px;">Simplify at Distance</span><div style="left:990.7px;top:456.4px;width:90.2px;height:16.4px;background:#1f2124;border:1px solid #6a6a6a;border-radius:8.2px;overflow:hidden;"></div>
<div style="left:991.7px;top:457.4px;width:21px;height:14.4px;background:#5e5e5e;border-radius:7.2px 0 0 7.2px;"></div>
<span style="left:1016px;top:458px;font-size:13px;color:#e0e0e0;letter-spacing:-0.101px;">2500.0</span><div style="left:1090px;top:463px;width:5px;height:5px;background:#585858;border-radius:1px;"></div>
<div style="left:863.7px;top:479.0px;width:234.79999999999995px;height:1.5px;background:#5e6062;"></div>
<span style="left:882px;top:489px;font-size:13px;color:#cdcdcd;letter-spacing:0.105px;">Normals</span><span style="left:1011px;top:39px;font-size:13px;color:#e2e2e2;letter-spacing:0.046px;">Stage</span><span style="left:1084px;top:39px;font-size:13px;color:#9a9a9a;letter-spacing:0.188px;">Layer</span><span style="left:1156px;top:39px;font-size:13px;color:#9a9a9a;letter-spacing:0.057px;">Render Settings</span><span style="left:1289px;top:39px;font-size:13px;color:#9a9a9a;letter-spacing:0.011px;">Robot Hierarchy</span><svg style="left:1019.5px;top:72.5px" width="12.0" height="12.0" viewBox="0 0 12 12"><circle cx="4.8" cy="4.8" r="3.6" fill="none" stroke="#5c5c5c" stroke-width="1.5"/><line x1="7.4" y1="7.4" x2="11" y2="11" stroke="#5c5c5c" stroke-width="1.7"/></svg>
<span style="left:1037px;top:72px;font-size:13px;color:#555555;letter-spacing:-0.054px;">Search</span><svg style="left:1393.6px;top:69.5px" width="16" height="15" viewBox="0 0 16 15"><polygon points="0,0 13,0 8.3,5.6 8.3,11.5 4.7,11.5 4.7,5.6" fill="#c8c8c8"/><polygon points="14.5,11 14.5,14 11.5,14" fill="#c8c8c8"/></svg>
<svg style="left:1417.5px;top:69.5px" width="12.5" height="12" viewBox="0 0 12.5 12"><rect x="0" y="0.5" width="12.5" height="2" fill="#c8c8c8"/><rect x="0" y="4.8" width="12.5" height="2" fill="#c8c8c8"/><rect x="0" y="9.1" width="12.5" height="2" fill="#c8c8c8"/></svg>
<span style="left:1018px;top:100px;font-size:10px;color:#dcdcdc;font-weight:700;letter-spacing:0.398px;-webkit-text-stroke:0;">Name (Old to New)</span><span style="left:1332px;top:100px;font-size:10px;color:#dcdcdc;font-weight:700;letter-spacing:-0.052px;-webkit-text-stroke:0;">Type</span><svg style="left:1302px;top:99.0px" width="16" height="11" viewBox="0 0 16 11"><path d="M0.7,5.5 Q8,-3.2 15.3,5.5 Q8,13.6 0.7,5.5 Z" fill="none" stroke="#8a8a8a" stroke-width="1"/><circle cx="8.4" cy="4.4" r="3.5" fill="#8a8a8a"/></svg>
<svg style="left:1013.3px;top:117.3px" width="10" height="10" viewBox="0 0 10 10"><rect width="10" height="10" rx="1.6" fill="#82949a"/><rect x="2" y="4" width="6" height="2" fill="#1f2124"/></svg>
<svg style="left:1028px;top:110px" width="20" height="20" viewBox="1028 110 20 20">
<line x1="1032.6" y1="120.4" x2="1032.6" y2="124" stroke="#b05c14" stroke-width="0.9"/>
<line x1="1038.2" y1="124.7" x2="1037.4" y2="120.6" stroke="#7cc47c" stroke-width="1.9"/>
<path d="M1031.5,124.6 C1029.8,118.6 1032,116.7 1039,116.7" fill="none" stroke="#2448dc" stroke-width="3.2"/>
<polygon points="1038.4,112 1043.3,116.6 1038.4,121.3" fill="#2448dc"/>
<path d="M1031.6,122 C1031,118.4 1033,117 1040.4,116.8" fill="none" stroke="#7ba4ec" stroke-width="1.3"/>
<line x1="1038.2" y1="124.8" x2="1031.4" y2="127.8" stroke="#2cb6d6" stroke-width="2.5" stroke-linecap="round"/>
<line x1="1038.4" y1="124.8" x2="1044.8" y2="128" stroke="#d06a6a" stroke-width="2.5" stroke-linecap="round"/></svg>
<span style="left:1052px;top:116px;font-size:13px;color:#79898c;letter-spacing:0.130px;">ur10 (defaultPrim)</span><svg style="left:1302px;top:116.8px" width="16" height="11" viewBox="0 0 16 11"><path d="M0.7,5.5 Q8,-3.2 15.3,5.5 Q8,13.6 0.7,5.5 Z" fill="none" stroke="#7a8a8d" stroke-width="1"/><circle cx="8.4" cy="4.4" r="3.5" fill="#7a8a8d"/></svg>
<span style="left:1330px;top:116px;font-size:13px;color:#79898c;letter-spacing:0.119px;">Xform</span><svg style="left:1032.8px;top:137.3px" width="10" height="10" viewBox="0 0 10 10"><rect width="10" height="10" rx="1.6" fill="#82949a"/><rect x="2" y="4" width="6" height="2" fill="#1f2124"/><rect x="4" y="2" width="2" height="6" fill="#1f2124"/></svg>
<svg style="left:1050px;top:135.2px" width="18" height="15" viewBox="0 0 18 15"><path d="M1.6,0 H6.4 Q7.4,0 8,1.2 L8.6,2.6 H15.6 Q17.2,2.6 17.2,4.2 V12.6 Q17.2,14.2 15.6,14.2 H1.6 Q0,14.2 0,12.6 V1.6 Q0,0 1.6,0 Z" fill="#46555a"/></svg>
<span style="left:1071px;top:136px;font-size:13px;color:#79898c;letter-spacing:-0.277px;">Physics</span><svg style="left:1302px;top:136.8px" width="16" height="11" viewBox="0 0 16 11"><path d="M0.7,5.5 Q8,-3.2 15.3,5.5 Q8,13.6 0.7,5.5 Z" fill="none" stroke="#7a8a8d" stroke-width="1"/><circle cx="8.4" cy="4.4" r="3.5" fill="#7a8a8d"/></svg>
<span style="left:1329px;top:136px;font-size:13px;color:#79898c;letter-spacing:-0.502px;">Scope</span><svg style="left:1032.8px;top:157.3px" width="10" height="10" viewBox="0 0 10 10"><rect width="10" height="10" rx="1.6" fill="#82949a"/><rect x="2" y="4" width="6" height="2" fill="#1f2124"/><rect x="4" y="2" width="2" height="6" fill="#1f2124"/></svg>
<svg style="left:1050px;top:155.2px" width="18" height="15" viewBox="0 0 18 15"><path d="M1.6,0 H6.4 Q7.4,0 8,1.2 L8.6,2.6 H15.6 Q17.2,2.6 17.2,4.2 V12.6 Q17.2,14.2 15.6,14.2 H1.6 Q0,14.2 0,12.6 V1.6 Q0,0 1.6,0 Z" fill="#46555a"/></svg>
<span style="left:1071px;top:156px;font-size:13px;color:#79898c;letter-spacing:0.114px;">Geometry</span><svg style="left:1302px;top:156.8px" width="16" height="11" viewBox="0 0 16 11"><path d="M0.7,5.5 Q8,-3.2 15.3,5.5 Q8,13.6 0.7,5.5 Z" fill="none" stroke="#7a8a8d" stroke-width="1"/><circle cx="8.4" cy="4.4" r="3.5" fill="#7a8a8d"/></svg>
<span style="left:1329px;top:156px;font-size:13px;color:#79898c;letter-spacing:-0.502px;">Scope</span><svg style="left:1050px;top:175.2px" width="18" height="15" viewBox="0 0 18 15"><path d="M1.6,0 H6.4 Q7.4,0 8,1.2 L8.6,2.6 H15.6 Q17.2,2.6 17.2,4.2 V12.6 Q17.2,14.2 15.6,14.2 H1.6 Q0,14.2 0,12.6 V1.6 Q0,0 1.6,0 Z" fill="#46555a"/></svg>
<span style="left:1071px;top:176px;font-size:13px;color:#79898c;letter-spacing:0.273px;">Materials</span><svg style="left:1302px;top:176.8px" width="16" height="11" viewBox="0 0 16 11"><path d="M0.7,5.5 Q8,-3.2 15.3,5.5 Q8,13.6 0.7,5.5 Z" fill="none" stroke="#7a8a8d" stroke-width="1"/><circle cx="8.4" cy="4.4" r="3.5" fill="#7a8a8d"/></svg>
<span style="left:1329px;top:176px;font-size:13px;color:#79898c;letter-spacing:-0.502px;">Scope</span><svg style="left:1050px;top:195.2px" width="18" height="15" viewBox="0 0 18 15"><path d="M1.6,0 H6.4 Q7.4,0 8,1.2 L8.6,2.6 H15.6 Q17.2,2.6 17.2,4.2 V12.6 Q17.2,14.2 15.6,14.2 H1.6 Q0,14.2 0,12.6 V1.6 Q0,0 1.6,0 Z" fill="#46555a"/></svg>
<span style="left:1072px;top:196px;font-size:13px;color:#79898c;letter-spacing:-0.007px;">VisualMaterials</span><svg style="left:1302px;top:196.8px" width="16" height="11" viewBox="0 0 16 11"><path d="M0.7,5.5 Q8,-3.2 15.3,5.5 Q8,13.6 0.7,5.5 Z" fill="none" stroke="#7a8a8d" stroke-width="1"/><circle cx="8.4" cy="4.4" r="3.5" fill="#7a8a8d"/></svg>
<span style="left:1329px;top:196px;font-size:13px;color:#79898c;letter-spacing:-0.502px;">Scope</span><svg style="left:952px;top:788px" width="18" height="18" viewBox="0 0 18 18"><polygon points="0,0.5 15.4,0.5 9.8,7 9.8,14 5.6,14 5.6,7" fill="#c8c8c8"/><polygon points="16.5,13.5 16.5,17 13,17" fill="#c8c8c8"/></svg>
<svg style="left:976px;top:788px" width="16" height="16" viewBox="0 0 16 16"><rect x="0" y="0.2" width="16" height="2.6" fill="#c8c8c8"/><rect x="0" y="6.2" width="16" height="2.6" fill="#c8c8c8"/><rect x="0" y="12.2" width="16" height="2.6" fill="#c8c8c8"/></svg>
</body></html>
